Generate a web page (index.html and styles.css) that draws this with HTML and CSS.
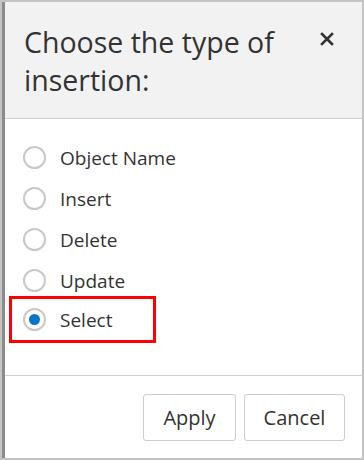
FILE: index.html
```html
<!DOCTYPE html>
<html lang="en">
<head>
    <meta charset="UTF-8">
    <meta name="viewport" content="width=device-width, initial-scale=1.0">
    <title>Choose the type of insertion</title>
    <link rel="stylesheet" href="styles.css">
</head>
<body>
    <div class="dialog">
        <div class="dialog-header">
            <h2>Choose the type of insertion:</h2>
            <button class="close-btn" aria-label="Close">
                <svg width="14" height="14" viewBox="0 0 14 14">
                    <path d="M2 2 L12 12 M12 2 L2 12" stroke="#333" stroke-width="2.6" stroke-linecap="square"/>
                </svg>
            </button>
        </div>

        <div class="dialog-body">
            <label class="option">
                <input type="radio" name="insertion" value="object">
                <span class="radio"></span>
                <span>Object Name</span>
            </label>
            <label class="option">
                <input type="radio" name="insertion" value="insert">
                <span class="radio"></span>
                <span>Insert</span>
            </label>
            <label class="option">
                <input type="radio" name="insertion" value="delete">
                <span class="radio"></span>
                <span>Delete</span>
            </label>
            <label class="option">
                <input type="radio" name="insertion" value="update">
                <span class="radio"></span>
                <span>Update</span>
            </label>
            <label class="option highlighted">
                <input type="radio" name="insertion" value="select" checked>
                <span class="radio"></span>
                <span>Select</span>
            </label>
        </div>

        <div class="dialog-footer">
            <button class="btn btn-apply">Apply</button>
            <button class="btn btn-cancel">Cancel</button>
        </div>
    </div>
</body>
</html>
```

FILE: styles.css
```css
* {
    margin: 0;
    padding: 0;
    box-sizing: border-box;
}

body {
    font-family: 'Open Sans', 'Noto Sans', sans-serif;
    background: #c4c4c4;
    padding: 2px;
    height: 460px;
    color: #333;
}

.dialog {
    background: #fff;
    border-left: 3px solid #8c8c8c;
    height: 456px;
    display: flex;
    flex-direction: column;
}

.dialog-header {
    background: #f2f2f2;
    height: 117px;
    border-bottom: 1px solid #cfcfcf;
    display: flex;
    align-items: flex-start;
    justify-content: space-between;
    padding: 21px 0 0 19px;
}

.dialog-header h2 {
    font-size: 28.5px;
    font-weight: 400;
    line-height: 38px;
    width: 275px;
    color: #333;
}

.close-btn {
    border: none;
    background: none;
    width: 14px;
    height: 14px;
    margin: 9px 28px 0 0;
    cursor: pointer;
    display: flex;
}

.dialog-body {
    flex: 1;
    padding: 18px 0 0 4px;
    border-bottom: 1px solid #cfcfcf;
}

.option {
    display: flex;
    align-items: center;
    gap: 14px;
    height: 41px;
    padding-left: 14px;
    font-size: 19px;
    white-space: nowrap;
    cursor: pointer;
}

.option input {
    display: none;
}

.radio {
    flex-shrink: 0;
    width: 23px;
    height: 23px;
    border: 2px solid #c8c8c8;
    border-radius: 50%;
    background: #fff;
    display: flex;
    align-items: center;
    justify-content: center;
}

.option input:checked + .radio::after {
    content: '';
    width: 11px;
    height: 11px;
    border-radius: 50%;
    background: #0a74c9;
}

.highlighted {
    width: 147px;
    height: 47px;
    margin-top: -5px;
    padding-left: 11px;
    border: 3px solid #f00;
}

.dialog-footer {
    height: 82px;
    display: flex;
    justify-content: flex-end;
    align-items: flex-start;
    gap: 8px;
    padding: 18px 17px 0 0;
}

.btn {
    font-family: inherit;
    font-size: 20px;
    color: #333;
    background: #fff;
    border: 1px solid #cccccc;
    border-radius: 3px;
    height: 47px;
    cursor: pointer;
}

.btn-apply {
    width: 93px;
}

.btn-cancel {
    width: 101px;
}
```
